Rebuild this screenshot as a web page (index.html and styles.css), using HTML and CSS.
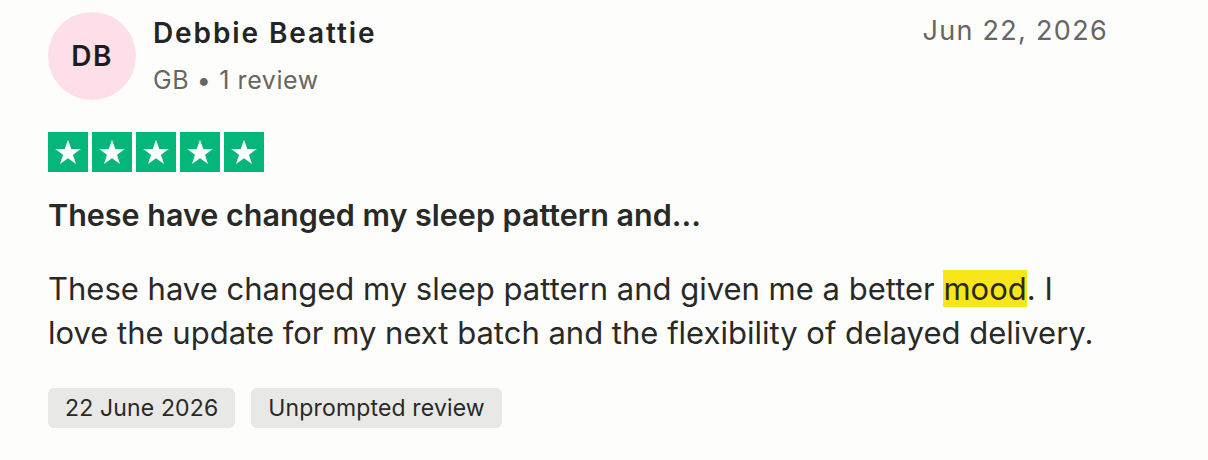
FILE: index.html
```html
<!DOCTYPE html>
<html lang="en">
<head>
    <meta charset="UTF-8">
    <meta name="viewport" content="width=device-width, initial-scale=1.0">
    <title>Review</title>
    <link rel="stylesheet" href="styles.css">
</head>
<body>
    <article class="review">
        <!-- Reviewer header -->
        <header class="review-header">
            <div class="consumer">
                <div class="avatar">DB</div>
                <div class="consumer-info">
                    <div class="consumer-name">Debbie Beattie</div>
                    <div class="consumer-meta">GB • 1 review</div>
                </div>
            </div>
            <time class="review-date">Jun 22, 2026</time>
        </header>

        <!-- Star rating -->
        <div class="stars">
            <span class="star"><svg viewBox="0 0 24 24"><path d="M12 2.2l2.6 7.4h7.6l-6.2 4.5 2.4 7.5-6.4-4.7-6.4 4.7 2.4-7.5-6.2-4.5h7.6z"/></svg></span>
            <span class="star"><svg viewBox="0 0 24 24"><path d="M12 2.2l2.6 7.4h7.6l-6.2 4.5 2.4 7.5-6.4-4.7-6.4 4.7 2.4-7.5-6.2-4.5h7.6z"/></svg></span>
            <span class="star"><svg viewBox="0 0 24 24"><path d="M12 2.2l2.6 7.4h7.6l-6.2 4.5 2.4 7.5-6.4-4.7-6.4 4.7 2.4-7.5-6.2-4.5h7.6z"/></svg></span>
            <span class="star"><svg viewBox="0 0 24 24"><path d="M12 2.2l2.6 7.4h7.6l-6.2 4.5 2.4 7.5-6.4-4.7-6.4 4.7 2.4-7.5-6.2-4.5h7.6z"/></svg></span>
            <span class="star"><svg viewBox="0 0 24 24"><path d="M12 2.2l2.6 7.4h7.6l-6.2 4.5 2.4 7.5-6.4-4.7-6.4 4.7 2.4-7.5-6.2-4.5h7.6z"/></svg></span>
        </div>

        <h2 class="review-title">These have changed my sleep pattern and...</h2>

        <p class="review-text">These have changed my sleep pattern and given me a better <mark>mood</mark>. I<br>love the update for my next batch and the flexibility of delayed delivery.</p>

        <div class="tags">
            <span class="tag">22 June 2026</span>
            <span class="tag">Unprompted review</span>
        </div>
    </article>
</body>
</html>
```

FILE: styles.css
```css
* {
    margin: 0;
    padding: 0;
    box-sizing: border-box;
}

body {
    font-family: Inter, 'Noto Sans', sans-serif;
    background: #fdfdfc;
    color: #292927;
}

.review {
    width: 1060px;
    margin-left: 48px;
    padding-top: 12px;
}

/* Header */
.review-header {
    display: flex;
    justify-content: space-between;
    align-items: flex-start;
}

.consumer {
    display: flex;
    align-items: flex-start;
    gap: 17px;
}

.avatar {
    width: 88px;
    height: 88px;
    border-radius: 50%;
    background: #fedfe9;
    display: flex;
    align-items: center;
    justify-content: center;
    font-size: 28px;
    font-weight: 600;
    letter-spacing: 1.5px;
    color: #1c1c1c;
}

.consumer-info {
    padding-top: 3px;
}

.consumer-name {
    font-size: 28px;
    font-weight: 600;
    letter-spacing: 1.9px;
    line-height: 36px;
    color: #242422;
}

.consumer-meta {
    font-size: 25px;
    color: #676660;
    letter-spacing: 0.6px;
    line-height: 36px;
    margin-top: 11px;
}

.review-date {
    font-size: 27px;
    color: #676660;
    letter-spacing: 1.3px;
    line-height: 36px;
    padding-top: 1px;
}

/* Stars */
.stars {
    display: flex;
    gap: 4px;
    margin-top: 32px;
}

.star {
    width: 40px;
    height: 40px;
    background: #04b67a;
    display: flex;
    align-items: center;
    justify-content: center;
}

.star svg {
    width: 30px;
    height: 30px;
    fill: #fff;
}

/* Text */
.review-title {
    font-size: 30.5px;
    font-weight: 600;
    line-height: 40px;
    margin-top: 23px;
}

.review-text {
    font-size: 31px;
    line-height: 44px;
    margin-top: 32px;
}

.review-text mark {
    background: #f8e51a;
    color: inherit;
}

/* Tags */
.tags {
    display: flex;
    gap: 16px;
    margin-top: 33px;
}

.tag {
    background: #e8e8e6;
    border-radius: 6px;
    height: 40px;
    padding: 0 17px;
    display: flex;
    align-items: center;
    font-size: 23px;
    letter-spacing: 0.15px;
    color: #292927;
}
```
